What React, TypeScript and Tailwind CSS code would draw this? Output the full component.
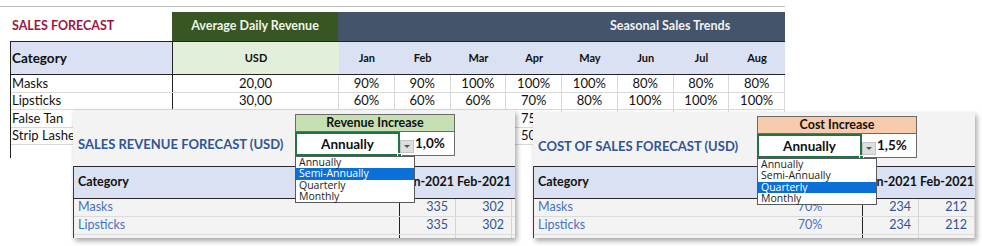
import React from "react";

const months = ["Jan", "Feb", "Mar", "Apr", "May", "Jun", "Jul", "Aug"];
const rows = [
  { name: "Masks", usd: "20,00", vals: ["90%", "90%", "100%", "100%", "100%", "80%", "80%", "80%"] },
  { name: "Lipsticks", usd: "30,00", vals: ["60%", "60%", "60%", "70%", "80%", "100%", "100%", "100%"] },
  { name: "False Tan", usd: "", vals: ["", "", "", "75%", "", "", "", ""] },
  { name: "Strip Lashes", usd: "", vals: ["", "", "", "50%", "", "", "", ""] },
];

const options = ["Annually", "Semi-Annually", "Quarterly", "Monthly"];

function Control({
  label,
  headerBg,
  pct,
  selected,
}: {
  label: string;
  headerBg: string;
  pct: string;
  selected: number;
}) {
  return (
    <div className="relative w-[160px]">
      <div
        className={`h-[18px] border border-[#6b6b6b] ${headerBg} flex items-center justify-center text-[12.5px] font-bold text-[#111]`}
      >
        {label}
      </div>
      <div className="flex h-[24px]">
        <div className="relative w-[105px] bg-white border-2 border-[#217346] flex items-center justify-center text-[13.5px] font-bold text-[#111]">
          Annually
          <div className="absolute right-[-4px] bottom-[-4px] w-[5px] h-[5px] bg-[#217346] border border-white" />
        </div>
        <div className="flex-1 bg-white border-r border-b border-[#6b6b6b] flex items-center">
          <div className="w-[14px] h-[13px] mt-[6px] bg-[#dedede] border border-[#c4c4c4] flex items-center justify-center">
            <div className="w-0 h-0 border-l-[3px] border-r-[3px] border-t-[3px] border-l-transparent border-r-transparent border-t-[#555]" />
          </div>
          <span className="text-[13.5px] font-bold text-[#111] ml-[1px]">{pct}</span>
        </div>
      </div>
      <div className="absolute left-0 top-[42px] w-[120px] h-[47px] bg-white border border-[#5a5a5a] z-10 font-['Open_Sans',sans-serif]">
        {options.map((o, i) => (
          <div
            key={o}
            className={`h-[11.25px] leading-[11.25px] text-[10.5px] pl-[3px] ${
              i === selected ? "bg-[#0a6fd6] text-white" : "text-[#222]"
            }`}
          >
            {o}
          </div>
        ))}
      </div>
    </div>
  );
}

function Panel({
  title,
  label,
  headerBg,
  pct,
  selected,
  midVals,
  vals,
  className,
  catW,
  midW,
  topH,
}: {
  title: string;
  label: string;
  headerBg: string;
  pct: string;
  selected: number;
  midVals: string[];
  vals: string[][];
  className: string;
  catW: string;
  midW: string;
  topH: string;
}) {
  return (
    <div
      className={`absolute bg-[#f3f3f3] shadow-[2px_3px_5px_rgba(0,0,0,0.35)] overflow-hidden ${className}`}
    >
      <div className={`flex ${topH}`}>
        <div className={`${catW} pl-[5px] pt-[25px] text-[13px] font-bold text-[#2f5597] whitespace-nowrap`}>
          {title}
        </div>
        <div className="pt-[4px] relative z-10">
          <Control label={label} headerBg={headerBg} pct={pct} selected={selected} />
        </div>
      </div>
      <div className="border-l border-[#3a3a3a]">
        <div className="flex h-[33px] bg-[#d9e1f2] border-y border-[#2b2b2b] items-center text-[12.5px] font-bold text-[#111]">
          <div className={`${catW} pl-[4px]`}>Category</div>
          <div className={`${midW}`} />
          <div className="w-[56px] text-center">Jan-2021</div>
          <div className="w-[56px] text-center">Feb-2021</div>
        </div>
        {["Masks", "Lipsticks", ""].map((n, r) => (
          <div key={r} className="flex h-[18px] border-b border-[#dcdcdc] items-center text-[12.5px]">
            <div className={`${catW} pl-[4px] text-[#4472c4]`}>{n}</div>
            <div className={`${midW} h-full text-center text-[#4472c4] border-r border-[#222] flex items-center justify-center`}>
              {n ? midVals[r] : ""}
            </div>
            <div className="w-[56px] h-full pr-[7px] text-right text-[#305496] border-r border-[#d4d4d4] flex items-center justify-end">
              {n ? vals[r][0] : ""}
            </div>
            <div className="w-[56px] h-full pr-[7px] text-right text-[#305496] border-r border-[#d4d4d4] flex items-center justify-end">
              {n ? vals[r][1] : ""}
            </div>
          </div>
        ))}
      </div>
    </div>
  );
}

export default function App() {
  return (
    <div className="relative w-[982px] h-[246px] bg-white overflow-hidden font-['Lato',sans-serif] text-[#111]">
      <div className="pt-[6px]">
        <div className="w-[785px] h-px bg-[#bdbdbd]" />
        <div className="h-[5px]" />
        <div className="ml-[10px] w-[775px]">
          <div className="grid grid-cols-[162px_166px_1fr] h-[29px]">
            <div className="flex items-center pl-[2px] text-[12.5px] font-bold text-[#a0153e]">SALES FORECAST</div>
            <div className="bg-[#375623] flex items-center justify-center text-[12.5px] font-bold text-[#eef5e8]">
              Average Daily Revenue
            </div>
            <div className="bg-[#44546a] flex items-center pl-[272px] text-[12.5px] font-bold text-[#f2f2f2]">
              Seasonal Sales Trends
            </div>
          </div>
          <div className="border-l border-[#222]">
            <div className="grid grid-cols-[162px_166px_repeat(8,1fr)] h-[34px] border-y border-[#222] text-[11px] font-bold">
              <div className="bg-[#d9e1f2] flex items-center pl-[1px] text-[13.5px] border-r border-[#222]">Category</div>
              <div className="bg-[#e2efda] flex items-center justify-center">USD</div>
              {months.map((m) => (
                <div key={m} className="bg-[#d9e1f2] flex items-center justify-center">
                  {m}
                </div>
              ))}
            </div>
            {rows.map((r) => (
              <div
                key={r.name}
                className="grid grid-cols-[162px_166px_repeat(8,1fr)] h-[17.5px] border-b border-[#d9d9d9] text-[13px] leading-none"
              >
                <div className="flex items-center pl-[1px] border-r border-[#222] whitespace-nowrap">{r.name}</div>
                <div className="flex items-center justify-center border-r border-[#d9d9d9]">{r.usd}</div>
                {r.vals.map((v, i) => (
                  <div key={i} className="flex items-center justify-center border-r border-[#d9d9d9]">
                    {v}
                  </div>
                ))}
              </div>
            ))}
            <div className="h-[13px]" />
          </div>
        </div>
      </div>

      <Panel
        className="left-[73px] top-[110px] w-[442px] h-[128px]"
        title="SALES REVENUE FORECAST (USD)"
        label="Revenue Increase"
        headerBg="bg-[#c6e0b4]"
        pct="1,0%"
        selected={1}
        midVals={["", ""]}
        vals={[["335", "302"], ["335", "302"]]}
        catW="w-[222px]"
        midW="w-[104px]"
        topH="h-[56px]"
      />
      <Panel
        className="left-[533px] top-[112px] w-[442px] h-[126px]"
        title="COST OF SALES FORECAST (USD)"
        label="Cost Increase"
        headerBg="bg-[#f8cbad]"
        pct="1,5%"
        selected={2}
        midVals={["70%", "70%"]}
        vals={[["234", "212"], ["234", "212"]]}
        catW="w-[224px]"
        midW="w-[105px]"
        topH="h-[54px]"
      />
    </div>
  );
}
